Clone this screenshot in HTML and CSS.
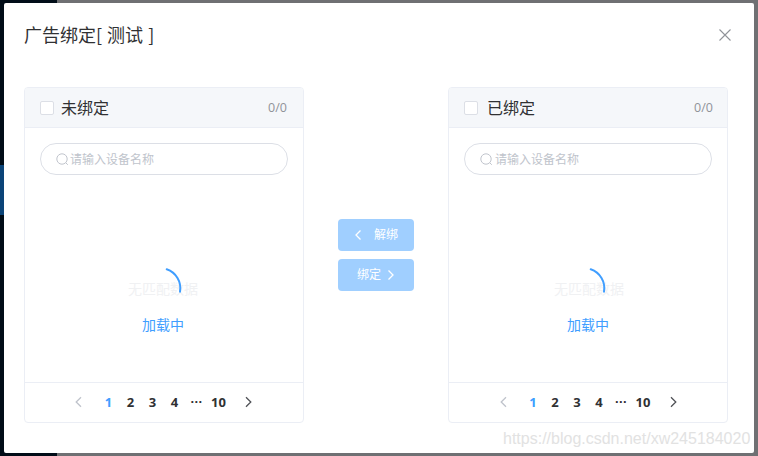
FILE: index.html
```html
<!DOCTYPE html>
<html lang="zh-CN">
<head>
<meta charset="utf-8">
<title>广告绑定</title>
<link rel="stylesheet" href="styles.css">
</head>
<body>
<div class="backdrop">
  <aside class="side"><div class="side-active"></div></aside>
  <main class="main"></main>
</div>
<section class="modal">
  <header class="modal-head">
    <h1 class="modal-title">广告绑定[ 测试 ]</h1>
    <svg class="close" width="12" height="12" viewBox="0 0 12 12"><path d="M.5.5l11 11M11.500.5l-11 11" stroke="#909399" stroke-width="1.100" fill="none"/></svg>
  </header>
  <div class="transfer">
    <div class="panel">
      <div class="panel-head">
        <span class="check"></span><span class="panel-label">未绑定</span><span class="count">0/0</span>
      </div>
      <div class="panel-body">
        <div class="search">
          <svg class="search-icon" width="13" height="13" viewBox="0 0 13 13"><circle cx="6" cy="6" r="5.200" stroke="#c0c4cc" stroke-width="1" fill="none"/><path d="M9.800 9.800l2 2" stroke="#c0c4cc" stroke-width="1" fill="none"/></svg>
          <span class="placeholder">请输入设备名称</span>
        </div>
        <div class="loading">
          <span class="empty">无匹配数据</span>
          <svg class="spinner" width="44" height="44" viewBox="0 0 44 44"><path d="M27.700 2.300A20 20 0 0 1 41 24.700" stroke="#409eff" stroke-width="2" stroke-linecap="round" fill="none"/></svg>
          <span class="loading-text">加载中</span>
        </div>
      </div>
      <nav class="pager">
        <svg class="pg-arrow" width="9" height="12" viewBox="0 0 9 12"><path d="M7 1.200L2.200 6 7 10.800" stroke="#c0c4cc" stroke-width="1.300" fill="none"/></svg>
        <span class="pg pg-on">1</span><span class="pg">2</span><span class="pg">3</span><span class="pg">4</span><span class="pg pg-more">···</span><span class="pg">10</span>
        <svg class="pg-arrow" width="9" height="12" viewBox="0 0 9 12"><path d="M2 1.200L6.800 6 2 10.800" stroke="#505257" stroke-width="1.300" fill="none"/></svg>
      </nav>
    </div>
    <div class="actions">
      <button class="btn btn-left"><svg width="8" height="12" viewBox="0 0 8 12"><path d="M6.500 1.500L2 6l4.500 4.500" stroke="#fff" stroke-width="1.300" fill="none"/></svg><span>解绑</span></button>
      <button class="btn btn-right"><span>绑定</span><svg width="8" height="12" viewBox="0 0 8 12"><path d="M1.500 1.500L6 6l-4.500 4.500" stroke="#fff" stroke-width="1.300" fill="none"/></svg></button>
    </div>
    <div class="panel panel-right">
      <div class="panel-head">
        <span class="check"></span><span class="panel-label">已绑定</span><span class="count">0/0</span>
      </div>
      <div class="panel-body">
        <div class="search">
          <svg class="search-icon" width="13" height="13" viewBox="0 0 13 13"><circle cx="6" cy="6" r="5.200" stroke="#c0c4cc" stroke-width="1" fill="none"/><path d="M9.800 9.800l2 2" stroke="#c0c4cc" stroke-width="1" fill="none"/></svg>
          <span class="placeholder">请输入设备名称</span>
        </div>
        <div class="loading">
          <span class="empty">无匹配数据</span>
          <svg class="spinner" width="44" height="44" viewBox="0 0 44 44"><path d="M27.700 2.300A20 20 0 0 1 41 24.700" stroke="#409eff" stroke-width="2" stroke-linecap="round" fill="none"/></svg>
          <span class="loading-text">加载中</span>
        </div>
      </div>
      <nav class="pager">
        <svg class="pg-arrow" width="9" height="12" viewBox="0 0 9 12"><path d="M7 1.200L2.200 6 7 10.800" stroke="#c0c4cc" stroke-width="1.300" fill="none"/></svg>
        <span class="pg pg-on">1</span><span class="pg">2</span><span class="pg">3</span><span class="pg">4</span><span class="pg pg-more">···</span><span class="pg">10</span>
        <svg class="pg-arrow" width="9" height="12" viewBox="0 0 9 12"><path d="M2 1.200L6.800 6 2 10.800" stroke="#505257" stroke-width="1.300" fill="none"/></svg>
      </nav>
    </div>
  </div>
</section>
<div class="watermark">https://blog.csdn.net/xw245184020</div>
</body>
</html>
```
FILE: styles.css
```css
* { box-sizing: border-box; }
html, body { margin: 0; height: 100%; overflow: hidden; }
body { font-family: "Noto Sans CJK SC", "Noto Sans", sans-serif; color: #303133; }

.backdrop { display: flex; height: 456px; width: 758px; }
.side { width: 57px; background: #010d18; padding-top: 165px; }
.side-active { height: 50px; background: #0b4478; }
.main { flex: 1; background: #6f7073; }

.modal {
  position: absolute; left: 4px; top: 3px;
  width: 750px; height: 450px;
  background: #fff; border-radius: 2px;
  padding: 0 26px 0 20px;
}
.modal-head { height: 84px; display: flex; justify-content: space-between; padding-top: 19px; }
.modal-title { margin: 0; font-size: 18px; font-weight: 400; line-height: 24px; word-spacing: 1px; }
.close { margin: 7px -3px 0 0; }

.transfer { display: flex; justify-content: space-between; }
.panel { width: 280px; height: 336px; border: 1px solid #ebeef5; border-radius: 4px; display: flex; flex-direction: column; overflow: hidden; }
.panel-head { height: 40px; flex: none; background: #f5f7fa; border-bottom: 1px solid #ebeef5; display: flex; align-items: center; padding: 0 15px; }
.check { width: 14px; height: 14px; margin-top: 1px; background: #fff; border: 1px solid #dcdfe6; border-radius: 2px; }
.panel-label { margin: 0 0 2px 7px; font-size: 16px; color: #303133; line-height: 20px; }
.panel-right .panel-label { margin-left: 9px; }
.count { margin-left: auto; margin-right: 1px; font-family: "Open Sans", sans-serif; font-size: 12.500px; color: #909399; }
.panel-right .count { margin-right: -1px; }

.panel-body { flex: 1; padding: 15px 15px 0; }
.search { height: 32px; width: 248px; border: 1px solid #dcdfe6; border-radius: 16px; display: flex; align-items: center; padding-left: 15px; }
.search-icon { flex: none; }
.placeholder { margin-left: 1px; font-size: 12px; color: #c0c4cc; line-height: 16px; }
.panel-right .placeholder { margin-left: 2px; }

.loading { position: relative; height: 207px; }
.empty { position: absolute; left: 88px; top: 103px; font-size: 14px; color: #f0f1f3; white-space: nowrap; }
.spinner { position: absolute; left: 99px; top: 92px; }
.loading-text { position: absolute; left: 102px; top: 139px; font-size: 14px; line-height: 20px; color: #409eff; white-space: nowrap; }
.panel-right .empty { left: 90px; }
.panel-right .loading-text { left: 103px; }

.pager { height: 40px; flex: none; border-top: 1px solid #ebeef5; display: flex; align-items: center; justify-content: center; padding: 0 1px 2px 0; }
.panel-right .pager { padding-right: 0; }
.pg { width: 22px; text-align: center; font-family: "Open Sans", sans-serif; font-size: 13px; font-weight: 700; color: #303133; line-height: 20px; }
.pg-on { color: #409eff; }
.pg-more { font-family: "Liberation Sans", sans-serif; letter-spacing: -.300px; padding-top: 1px; }
.pg-arrow { margin: 0 14.500px; }

.actions { display: flex; flex-direction: column; gap: 8px; margin-top: 132px; }
.btn { width: 76px; height: 32px; border: 0; border-radius: 4px; background: #a0cfff; color: #fff; font: inherit; font-size: 12px; display: flex; align-items: center; justify-content: center; padding: 0; }
.btn span { margin-bottom: 3px; }
.btn-left span { margin-left: 12px; }
.btn-right span { margin-right: 6px; }

.watermark { position: absolute; left: 503px; top: 430px; font-family: "Liberation Sans", sans-serif; font-size: 16px; line-height: 18px; color: #e2e2e2; white-space: nowrap; }
```
